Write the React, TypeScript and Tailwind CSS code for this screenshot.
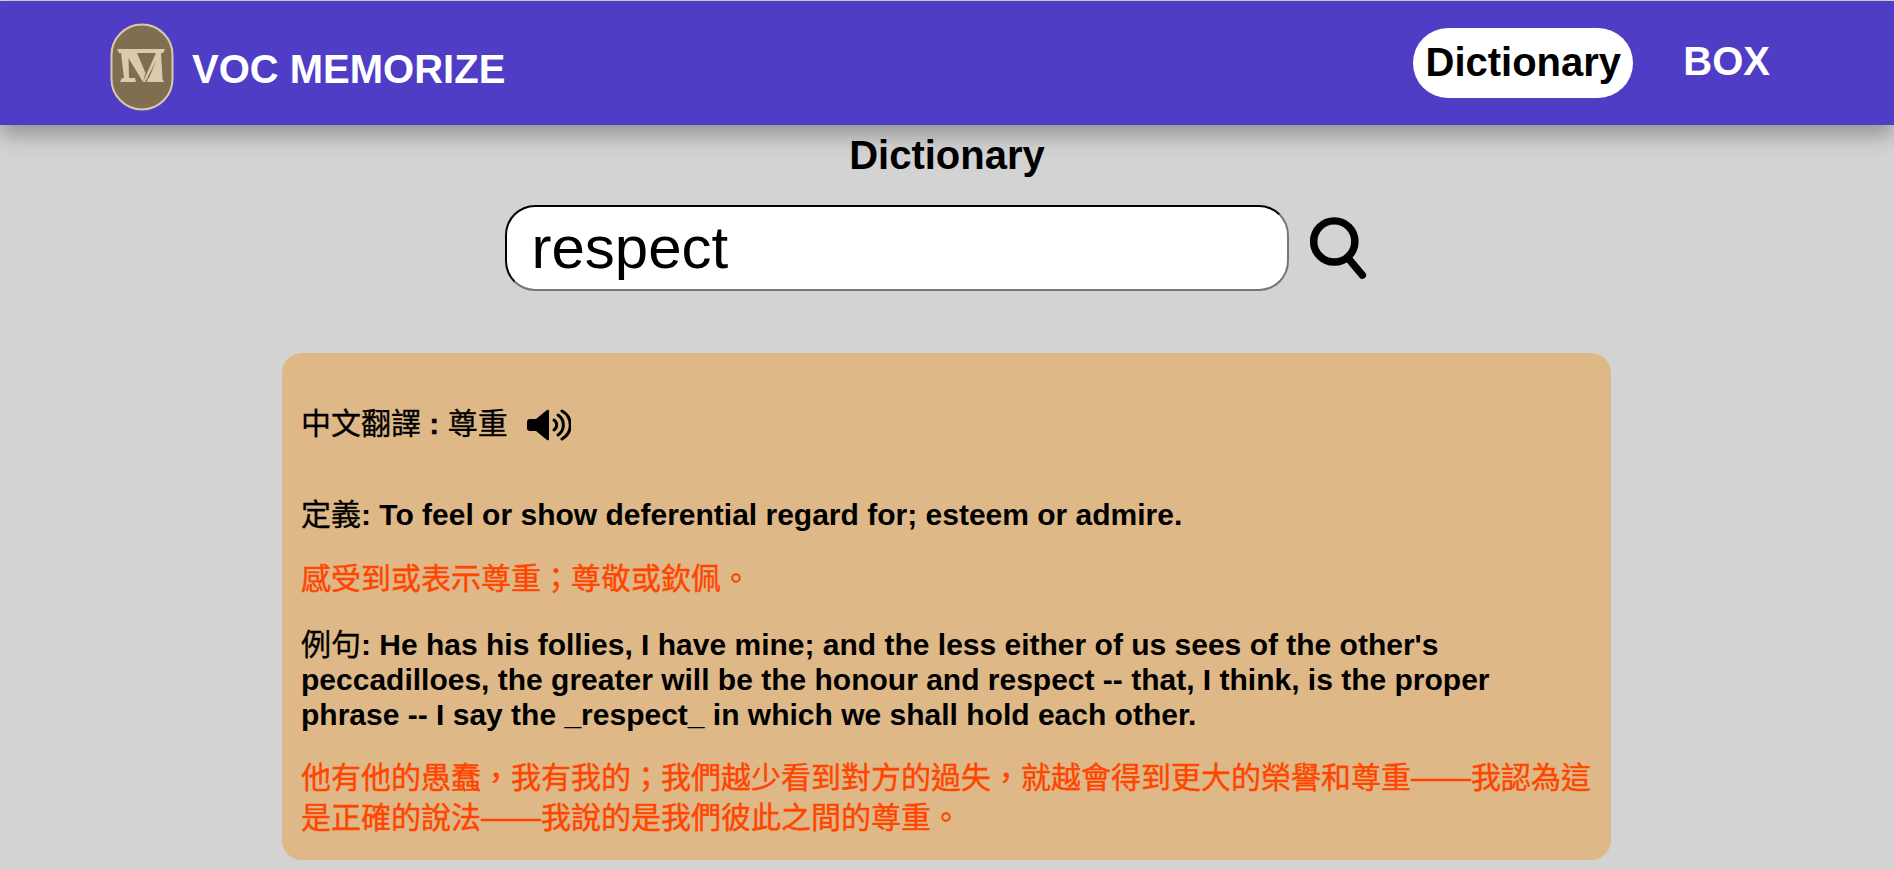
const FONT = "font-['Liberation_Sans','Noto_Sans_CJK_TC',sans-serif]";

function Logo() {
  return (
    <svg width="64" height="88" viewBox="0 0 64 88" className="shrink-0">
      <rect x="1.5" y="1.5" width="61" height="85" rx="30.5" fill="#7f6f50" stroke="#d9c9ab" strokeWidth="2" />
      <g fill="#dccbaa">
        <path d="M7 26 H55 L53 30 H9 Z" />
        <path d="M11 30 H27 L35.5 50 L33 59 L18.5 35 L19 55 H14 Z" />
        <path d="M33 59 L46 30 H51 L52.5 55 H39 L46.5 37 L35 59 Z" />
        <path d="M12 55 H25 L26 59 H10 Z" />
        <path d="M38 55 H52 L54 59 H37 Z" />
      </g>
    </svg>
  );
}

function SearchIcon() {
  return (
    <svg width="58" height="64" viewBox="0 0 62 68" fill="none" stroke="#000" strokeWidth="8" strokeLinecap="round">
      <circle cx="27" cy="27" r="22" />
      <path d="M42 45 L57 63" />
    </svg>
  );
}

function SpeakerIcon() {
  return (
    <svg width="44" height="32" viewBox="0 0 44 32" fill="none" className="mt-[2px] shrink-0">
      <path d="M3 10 H9 L20 1 Q22 0 22 2 V30 Q22 32 20 31 L9 22 H3 Q0 22 0 19 V13 Q0 10 3 10 Z" fill="#000" />
      <g stroke="#000" strokeWidth="3" strokeLinecap="round">
        <path d="M27 11 A6 6 0 0 1 27 21" />
        <path d="M31 6 A12 12 0 0 1 31 26" />
        <path d="M35 2 A16 16 0 0 1 35 30" />
      </g>
    </svg>
  );
}

export default function App() {
  return (
    <div lang="zh-TW" className={`min-h-screen bg-[#d3d3d3] pt-px text-black ${FONT}`}>
      <header className="flex h-[124px] items-center justify-between bg-[#4f3dc5] pl-[110px] pr-[124px] shadow-[0_10px_20px_rgba(0,0,0,0.3)]">
        <div className="flex items-center gap-[18px] pt-[8px]">
          <Logo />
          <span className="pt-[4px] text-[40px] font-bold text-white">VOC MEMORIZE</span>
        </div>
        <nav className="flex items-center gap-[50px]">
          <a className="flex h-[70px] w-[220px] items-center justify-center rounded-[35px] bg-white pb-[2px] text-[40px] font-bold text-black">
            Dictionary
          </a>
          <a className="pb-[4px] text-[40px] font-bold text-white">BOX</a>
        </nav>
      </header>

      <main className="flex flex-col items-center">
        <h1 className="mt-[7px] text-[40px] font-bold leading-[47px]">Dictionary</h1>
        <div className="mt-[26px] flex items-center gap-[20px] pr-[23px]">
          <input
            readOnly
            value="respect"
            className="h-[86px] w-[784px] rounded-[30px] border-2 border-t-black border-l-black border-r-[#767676] border-b-[#767676] bg-white px-[25px] text-[60px] outline-none"
          />
          <SearchIcon />
        </div>

        <section className="mr-px mt-[62px] w-[1329px] rounded-[20px] bg-[#deb887] px-[19px] pb-[22px] pt-[51px] text-[30px] font-bold">
          <div className="flex items-center gap-[19px] leading-[40px]">
            <span className="[-webkit-text-stroke:0.3px_#000] font-normal">
              中文翻譯 <b>:</b> 尊重
            </span>
            <SpeakerIcon />
          </div>
          <p className="mt-[51px] leading-[40px]">
            <span className="[-webkit-text-stroke:0.3px_#000] font-normal">定義</span>: To feel or show deferential regard for; esteem or admire.
          </p>
          <p className="mt-[24px] font-normal leading-[40px] text-[#ff4500] [-webkit-text-stroke:0.4px_#ff4500]">感受到或表示尊重；尊敬或欽佩。</p>
          <p className="mt-[28px] leading-[35px]">
            <span className="[-webkit-text-stroke:0.3px_#000] font-normal">例句</span>: He has his follies, I have mine; and the less either of us sees of the other's peccadilloes, the greater will be the honour and respect -- that, I think, is the proper phrase -- I say the _respect_ in which we shall hold each other.
          </p>
          <p className="mt-[26px] font-normal leading-[40px] text-[#ff4500] [-webkit-text-stroke:0.4px_#ff4500]">
            他有他的愚蠢，我有我的；我們越少看到對方的過失，就越會得到更大的榮譽和尊重——我認為這是正確的說法——我說的是我們彼此之間的尊重。
          </p>
        </section>
      </main>
    </div>
  );
}
